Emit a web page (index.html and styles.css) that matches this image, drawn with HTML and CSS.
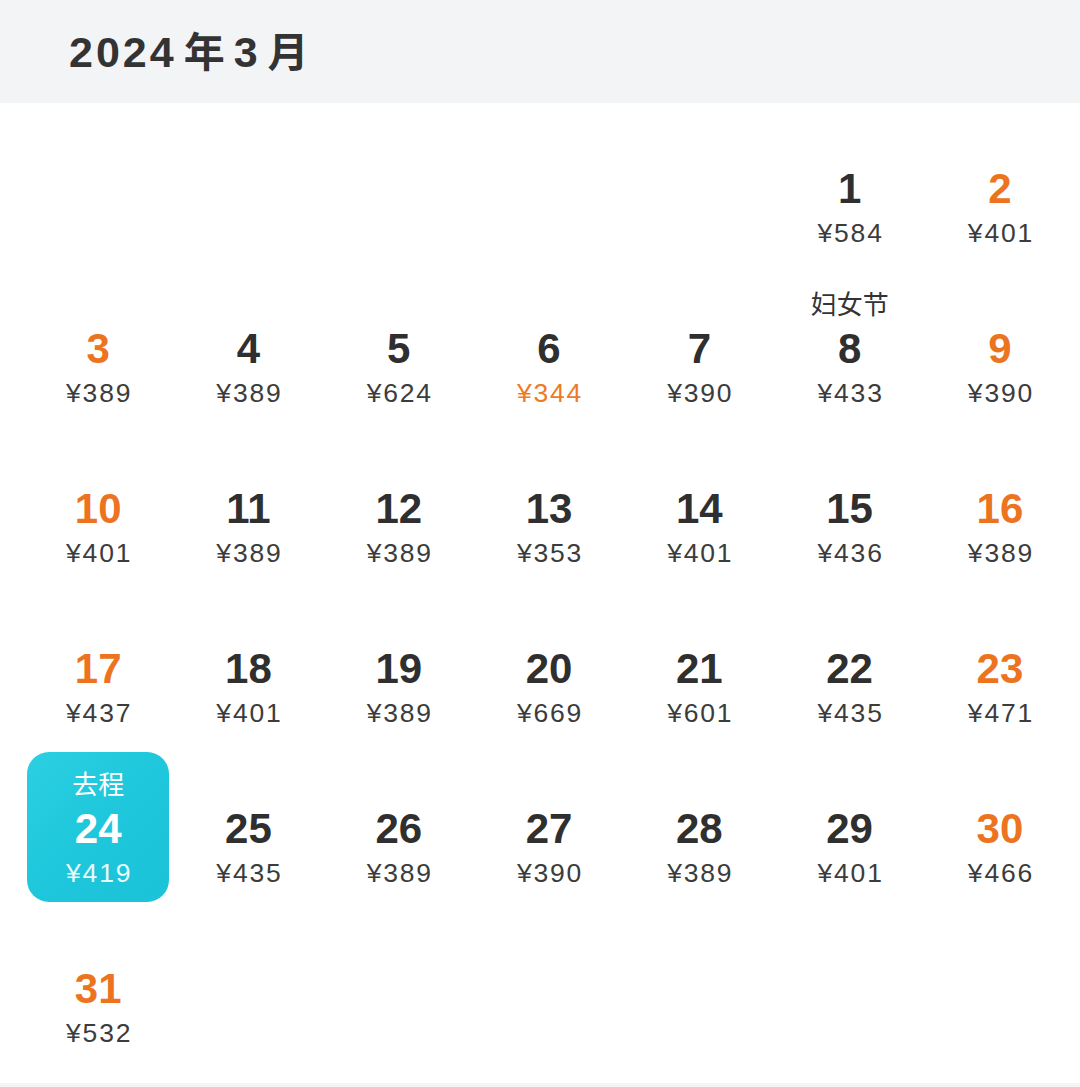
FILE: index.html
```html
<!DOCTYPE html>
<html lang="zh-CN">
<head>
<meta charset="utf-8">
<title>2024年3月</title>
<link rel="stylesheet" href="styles.css">
</head>
<body>
<div class="month-header"><h1 class="month-title">2024<span class="cjk">年</span>3<span class="cjk">月</span></h1></div>
<div class="calendar">
  <div class="cell empty"></div>
  <div class="cell empty"></div>
  <div class="cell empty"></div>
  <div class="cell empty"></div>
  <div class="cell empty"></div>
  <div class="cell"><span class="label"></span><span class="day">1</span><span class="price">¥584</span></div>
  <div class="cell weekend"><span class="label"></span><span class="day">2</span><span class="price">¥401</span></div>

  <div class="cell weekend"><span class="label"></span><span class="day">3</span><span class="price">¥389</span></div>
  <div class="cell"><span class="label"></span><span class="day">4</span><span class="price">¥389</span></div>
  <div class="cell"><span class="label"></span><span class="day">5</span><span class="price">¥624</span></div>
  <div class="cell"><span class="label"></span><span class="day">6</span><span class="price low">¥344</span></div>
  <div class="cell"><span class="label"></span><span class="day">7</span><span class="price">¥390</span></div>
  <div class="cell"><span class="label">妇女节</span><span class="day">8</span><span class="price">¥433</span></div>
  <div class="cell weekend"><span class="label"></span><span class="day">9</span><span class="price">¥390</span></div>

  <div class="cell weekend"><span class="label"></span><span class="day">10</span><span class="price">¥401</span></div>
  <div class="cell"><span class="label"></span><span class="day">11</span><span class="price">¥389</span></div>
  <div class="cell"><span class="label"></span><span class="day">12</span><span class="price">¥389</span></div>
  <div class="cell"><span class="label"></span><span class="day">13</span><span class="price">¥353</span></div>
  <div class="cell"><span class="label"></span><span class="day">14</span><span class="price">¥401</span></div>
  <div class="cell"><span class="label"></span><span class="day">15</span><span class="price">¥436</span></div>
  <div class="cell weekend"><span class="label"></span><span class="day">16</span><span class="price">¥389</span></div>

  <div class="cell weekend"><span class="label"></span><span class="day">17</span><span class="price">¥437</span></div>
  <div class="cell"><span class="label"></span><span class="day">18</span><span class="price">¥401</span></div>
  <div class="cell"><span class="label"></span><span class="day">19</span><span class="price">¥389</span></div>
  <div class="cell"><span class="label"></span><span class="day">20</span><span class="price">¥669</span></div>
  <div class="cell"><span class="label"></span><span class="day">21</span><span class="price">¥601</span></div>
  <div class="cell"><span class="label"></span><span class="day">22</span><span class="price">¥435</span></div>
  <div class="cell weekend"><span class="label"></span><span class="day">23</span><span class="price">¥471</span></div>

  <div class="cell selected"><span class="label">去程</span><span class="day">24</span><span class="price">¥419</span></div>
  <div class="cell"><span class="label"></span><span class="day">25</span><span class="price">¥435</span></div>
  <div class="cell"><span class="label"></span><span class="day">26</span><span class="price">¥389</span></div>
  <div class="cell"><span class="label"></span><span class="day">27</span><span class="price">¥390</span></div>
  <div class="cell"><span class="label"></span><span class="day">28</span><span class="price">¥389</span></div>
  <div class="cell"><span class="label"></span><span class="day">29</span><span class="price">¥401</span></div>
  <div class="cell weekend"><span class="label"></span><span class="day">30</span><span class="price">¥466</span></div>

  <div class="cell weekend"><span class="label"></span><span class="day">31</span><span class="price">¥532</span></div>
</div>
<div class="bottom-band"></div>
</body>
</html>
```
FILE: styles.css
```css
html, body {
  margin: 0;
  padding: 0;
  background: #ffffff;
  font-family: "Liberation Sans", "Noto Sans CJK SC", sans-serif;
  color: #333333;
}

.month-header {
  height: 103px;
  background: #f3f4f6;
  display: flex;
  align-items: center;
  padding-left: 69px;
  box-sizing: border-box;
}

.month-title {
  margin: 0;
  font-size: 43px;
  font-weight: 700;
  letter-spacing: 3px;
  color: #333333;
  line-height: 1;
  font-family: "Liberation Sans", "Noto Sans CJK SC", sans-serif;
  padding-top: 0;
}

.month-title .cjk {
  font-family: "Noto Sans CJK SC", sans-serif;
  font-weight: 700;
  font-size: 41px;
  letter-spacing: 0;
  margin: 0 9px 0 7px;
}

.calendar {
  display: grid;
  grid-template-columns: repeat(7, 150.3px);
  grid-auto-rows: 150px;
  row-gap: 10px;
  padding: 9px 5px 21px 23px;
}

.cell {
  margin: 0 4px;
  display: grid;
  grid-template-rows: 32px 58px 30px;
  padding-top: 16px;
  justify-items: center;
  align-items: center;
  border-radius: 22px;
}

.label {
  font-family: "Noto Sans CJK SC", sans-serif;
  font-size: 26px;
  line-height: 32px;
  color: #333333;
  margin-top: -2px;
}

.day {
  font-size: 42px;
  font-weight: 700;
  line-height: 58px;
  color: #2f2f2f;
}

.price {
  font-size: 26.5px;
  line-height: 30px;
  letter-spacing: 1.8px;
  color: #3c3c3c;
  padding-left: 2px;
}

.price.low {
  color: #ef7a26;
}

.weekend .day {
  color: #ec7421;
}

.selected {
  background: linear-gradient(135deg, #2ccfe1 0%, #1ec7db 50%, #1bc2d8 100%);
}

.selected .label,
.selected .day {
  color: #ffffff;
}

.selected .price {
  color: #eafbfd;
}

.bottom-band {
  height: 4px;
  background: #f3f4f6;
}
```
